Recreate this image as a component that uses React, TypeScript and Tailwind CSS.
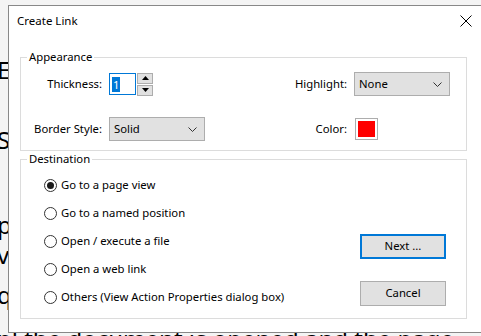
import React from 'react';

const FONT = { fontFamily: '"Noto Sans", "Segoe UI", Arial, sans-serif' };

function Chevron() {
  return (
    <svg width="9" height="5" viewBox="0 0 9 5" className="shrink-0">
      <path d="M0.5 0.5 L4.5 4.5 L8.5 0.5" fill="none" stroke="#333" strokeWidth="1" />
    </svg>
  );
}

function Select({ value }: { value: string }) {
  return (
    <div className="flex h-[24px] w-[96px] items-center justify-between border border-[#adadad] bg-[#e1e1e1] pl-[4px] pr-[7px] text-black">
      <span>{value}</span>
      <Chevron />
    </div>
  );
}

function Spinner() {
  return (
    <div className="flex items-center">
      <div className="flex h-[22px] w-[27px] items-center border border-[#0078d7] bg-white pl-[2px]">
        <span className="bg-[#0078d7] px-[1px] leading-[15px] text-white">1</span>
      </div>
      <div className="ml-[1px] flex flex-col gap-[1px]">
        <div className="flex h-[11px] w-[16px] items-center justify-center border border-[#adadad] bg-[#e1e1e1]">
          <svg width="7" height="4" viewBox="0 0 7 4"><path d="M0 4 L3.5 0 L7 4 Z" fill="#000" /></svg>
        </div>
        <div className="flex h-[11px] w-[16px] items-center justify-center border border-[#adadad] bg-[#e1e1e1]">
          <svg width="7" height="4" viewBox="0 0 7 4"><path d="M0 0 L3.5 4 L7 0 Z" fill="#000" /></svg>
        </div>
      </div>
    </div>
  );
}

function Radio({ label, checked }: { label: string; checked?: boolean }) {
  return (
    <div className="flex h-[28px] items-center">
      <div className="flex h-[13px] w-[13px] items-center justify-center rounded-full border border-[#333] bg-white">
        {checked && <div className="h-[7px] w-[7px] rounded-full bg-[#1a1a1a]" />}
      </div>
      <span className="ml-[4px] text-black">{label}</span>
    </div>
  );
}

function Group({ title, className, children }: { title: string; className: string; children: React.ReactNode }) {
  return (
    <div className={`relative shrink-0 border border-[#dcdcdc] ${className}`}>
      <span className="absolute -top-[9px] left-[6px] bg-white px-[2px] leading-[16px] text-black">{title}</span>
      {children}
    </div>
  );
}

export default function App() {
  // bits of the document page that peek out around the dialog
  const backdrop = [
    { t: 'Ex', mt: 'mt-[55px]' },
    { t: 'Se', mt: 'mt-[40px]' },
    { t: 'po', mt: 'mt-[55px]' },
    { t: 'vi', mt: 'mt-[0px]' },
    { t: 'qu', mt: 'mt-[10px]' },
    { t: 'pl the document is opened and the page', mt: 'mt-[14px]' },
  ];
  return (
    <div className="relative h-[336px] w-[481px] overflow-hidden bg-[#f4f4f4] text-[11.3px]" style={FONT}>
      <div className="-ml-[3px] text-[24px] leading-[30px] text-black">
        {backdrop.map((l, i) => (
          <div key={i} className={`${l.mt} whitespace-nowrap`}>{l.t}</div>
        ))}
      </div>

      {/* dialog */}
      <div className="absolute left-[8px] top-[5px] z-10 flex h-[328px] w-[480px] flex-col border border-[#888] bg-white">
        <div className="flex h-[30px] shrink-0 items-center justify-between pl-[8px] pr-[15px]">
          <span className="text-[11.5px] text-black">Create Link</span>
          <svg width="12" height="12" viewBox="0 0 12 12">
            <path d="M0.5 0.5 L11.5 11.5 M11.5 0.5 L0.5 11.5" stroke="#000" strokeWidth="1" />
          </svg>
        </div>

        <Group title="Appearance" className="ml-[11px] mt-[21px] h-[94px] w-[447px]">
          <div className="flex flex-col gap-[21px] pt-[14px]">
            <div className="flex h-[24px] items-center">
              <span className="w-[81px] text-right text-black">Thickness:</span>
              <div className="ml-[7px]"><Spinner /></div>
              <div className="ml-auto flex items-center pr-[16px]">
                <span className="text-black">Highlight:</span>
                <div className="ml-[7px]"><Select value="None" /></div>
              </div>
            </div>
            <div className="flex h-[24px] items-center">
              <span className="w-[81px] text-right text-black">Border Style:</span>
              <div className="ml-[7px]"><Select value="Solid" /></div>
              <div className="ml-auto flex items-center pr-[16px]">
                <span className="text-black">Color:</span>
                <div className="ml-[8px] w-[95px]">
                  <div className="h-[22px] w-[23px] border border-[#adadad] bg-white p-[2px]">
                    <div className="h-full w-full bg-[#ff0000]" />
                  </div>
                </div>
              </div>
            </div>
          </div>
        </Group>

        <Group title="Destination" className="ml-[11px] mt-[8px] h-[160px] w-[447px]">
          <div className="flex">
            <div className="flex flex-col pl-[23px] pt-[11px]">
              <Radio label="Go to a page view" checked />
              <Radio label="Go to a named position" />
              <Radio label="Open / execute a file" />
              <Radio label="Open a web link" />
              <Radio label="Others (View Action Properties dialog box)" />
            </div>
            <div className="ml-auto flex flex-col gap-[22px] pr-[20px] pt-[74px]">
              <div className="flex h-[25px] w-[86px] items-center justify-center border-2 border-[#0078d7] bg-[#e1e1e1] text-black">Next ...</div>
              <div className="flex h-[25px] w-[86px] items-center justify-center border border-[#adadad] bg-[#e1e1e1] text-black">Cancel</div>
            </div>
          </div>
        </Group>
      </div>
    </div>
  );
}
